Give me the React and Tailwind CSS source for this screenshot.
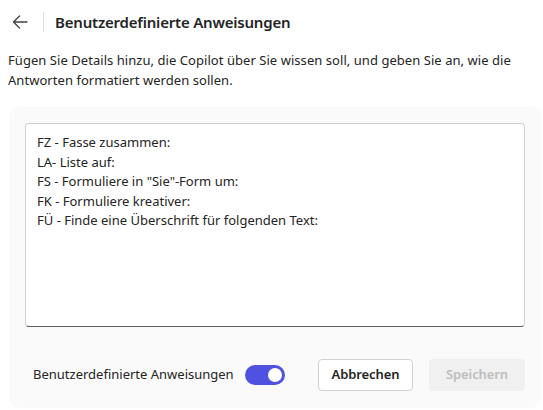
import React from "react";

export default function App() {
  const lines = [
    "FZ - Fasse zusammen:",
    "LA- Liste auf:",
    'FS - Formuliere in "Sie"-Form um:',
    "FK - Formuliere kreativer:",
    "FÜ - Finde eine Überschrift für folgenden Text:",
  ];
  return (
    <div
      className="w-[543px] h-[410px] bg-white text-[#242424] overflow-hidden"
      style={{ fontFamily: '"Noto Sans", "Open Sans", sans-serif' }}
    >
      <div className="flex items-center h-[44px] pl-[11px]">
        <svg width="18" height="18" viewBox="0 0 18 18" className="text-[#424242]">
          <path d="M16 9H2.5M8.5 3L2.5 9l6 6" fill="none" stroke="currentColor" strokeWidth="1.3" strokeLinecap="round" strokeLinejoin="round" />
        </svg>
        <div className="w-px h-[20px] bg-[#e0e0e0] ml-[14px] mr-[11px]" />
        <div className="text-[15px] font-semibold tracking-[-0.2px]">Benutzerdefinierte Anweisungen</div>
      </div>
      <p className="mt-[6px] px-[8px] text-[13px] leading-[20px] tracking-[0.05px]">
        Fügen Sie Details hinzu, die Copilot über Sie wissen soll, und geben Sie an, wie die Antworten formatiert werden sollen.
      </p>
      <div className="ml-[9px] mr-[2px] mt-[17px] h-[301px] rounded-[10px] bg-[#fafafa] px-[16px] pt-[16px]">
        <div className="h-[204px] bg-white border border-[#d1d1d1] border-b-[#616161] rounded-[4px] px-[11px] pt-[9px] text-[13px] leading-[19.5px]">
          {lines.map((l) => (
            <div key={l}>{l}</div>
          ))}
        </div>
        <div className="flex items-center mt-[32px]">
          <span className="ml-[8px] text-[13px] whitespace-nowrap shrink-0">Benutzerdefinierte Anweisungen</span>
          <div className="ml-[11px] shrink-0 w-[40px] h-[20px] rounded-full bg-[#4f52e0] flex items-center justify-end pr-[3px]">
            <div className="w-[14px] h-[14px] rounded-full bg-white" />
          </div>
          <div className="flex-1" />
          <button className="shrink-0 w-[95px] h-[32px] rounded-[4px] border border-[#d1d1d1] bg-white text-[13px] font-semibold tracking-[-0.1px]">
            Abbrechen
          </button>
          <button className="shrink-0 ml-[16px] w-[96px] h-[32px] rounded-[4px] bg-[#f0f0f0] text-[#bdbdbd] text-[13px] font-semibold tracking-[-0.1px]">
            Speichern
          </button>
        </div>
      </div>
    </div>
  );
}
